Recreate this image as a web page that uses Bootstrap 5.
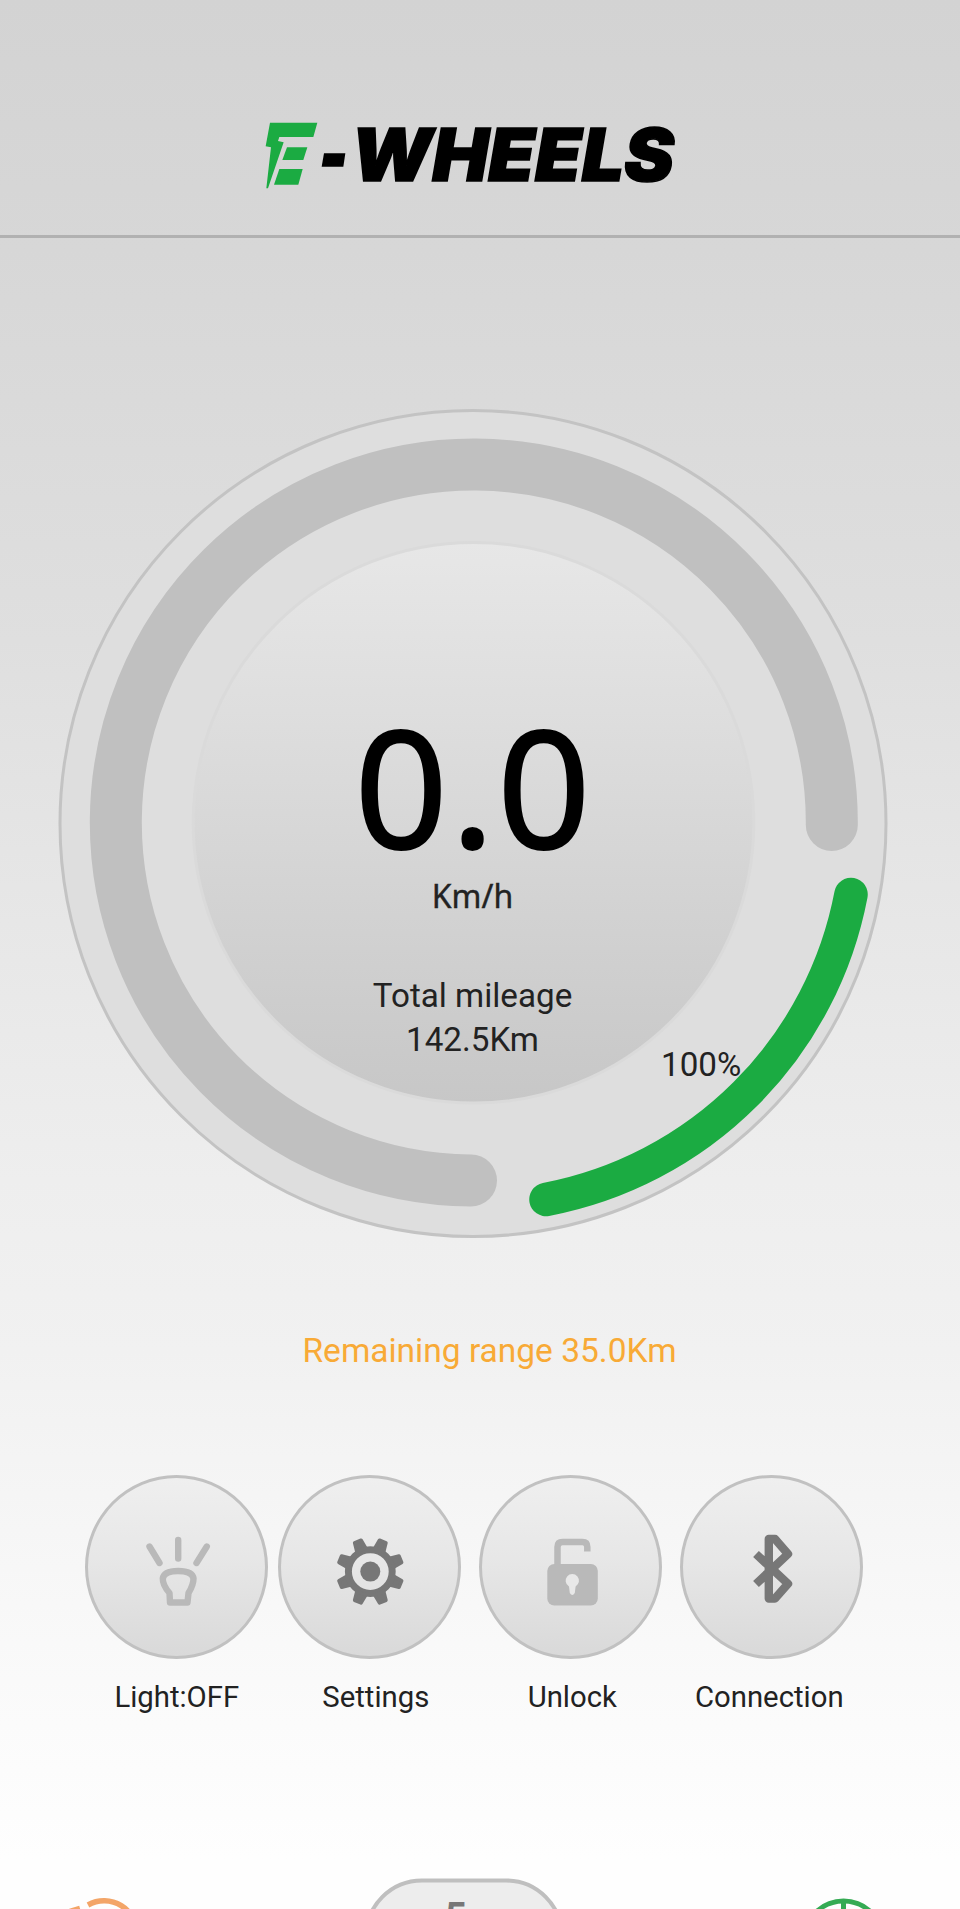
<!DOCTYPE html>
<html lang="en">
<head>
<meta charset="utf-8">
<meta name="viewport" content="width=device-width, initial-scale=1">
<title>E-Wheels</title>
<link rel="stylesheet" href="https://cdn.jsdelivr.net/npm/bootstrap@5.3.0/dist/css/bootstrap.min.css">
<style>
  body { font-family: Roboto, "Noto Sans", sans-serif; color: #222; background: #fefefe; }
  .app { width: 960px; height: 1909px;
    background: linear-gradient(#d3d3d3 0, #d7d7d7 250px, #dbdbdb 450px, #dfdfdf 640px, #e5e5e5 850px, #eee 1180px, #f1f1f1 1350px, #f6f6f6 1530px, #fafafa 1680px, #fefefe 1860px); }
  .top-bar { height: 238px; padding: 100px 0 0 240px; border-bottom: 3px solid #b1b1b1; }
  .gauge { width: 828px; height: 828px; margin: 171px 0 0 60px; }
  .readout { inset: 0; padding-right: 3px; }
  .speed { font: 400 163px/150px "Noto Sans", sans-serif; color: #000; margin-top: 301px; letter-spacing: 3px; text-indent: 3px; -webkit-text-stroke: 2px #000; }
  .unit { font: 400 32px/40px "Noto Sans", sans-serif; margin-top: 16px; -webkit-text-stroke: .4px #222; }
  .mileage { font-size: 33.2px; line-height: 44px; margin-top: 58px; }
  .charge { left: 601px; top: 634px; font-size: 33.2px; line-height: 44px; }
  .range-left { margin: 89px 0 0 19px; font-size: 33.5px; line-height: 50px; color: #f8aa36; }
  .actions { display: grid; grid-template-columns: 193px 200.5px 201px 184px; margin: 99px 0 0 85.3px; }
  .round-btn { width: 183px; height: 184px; border: 3px solid #c1c1c1; background: linear-gradient(#efefef, #e7e7e7 45%, #d9d9d9); }
  .round-btn svg { width: 183px; height: 184px; margin: -3px; display: block; }
  .caption { width: 183px; font-size: 29.3px; line-height: 36px; margin-top: 20px; }
</style>
</head>
<body>
<div class="app d-flex flex-column overflow-hidden">
  <header class="top-bar flex-shrink-0">
    <svg class="d-block" width="460" height="100" viewBox="0 0 460 100" role="img" aria-label="E-Wheels">
      <g transform="scale(.33333)">
        <g fill="#1bab42">
          <path d="M90 68H232L220 111H118L114 123L131 127L84 265H79L93 142L77 139Z"/>
          <path d="M141 142H202L190 180H127Z"/>
          <path d="M118 207H188L175 254H102Z"/>
        </g>
        <path d="M252 160H316L310 200H245Z"/>
      </g>
      <text x="111" y="80.500" font-family="Inter, sans-serif" font-weight="900" font-style="italic" font-size="73" textLength="323" lengthAdjust="spacingAndGlyphs" stroke="#000" stroke-width="1.600">WHEELS</text>
    </svg>
  </header>

  <section class="gauge position-relative flex-shrink-0">
    <svg class="d-block overflow-visible" width="828" height="828" viewBox="60 409 828 828">
      <defs>
        <linearGradient id="dial" x1="0" y1="0" x2="0" y2="1">
          <stop offset="0" stop-color="#e7e7e7"/><stop offset=".3" stop-color="#dedede"/><stop offset="1" stop-color="#c7c7c7"/>
        </linearGradient>
      </defs>
      <circle cx="473" cy="823.500" r="413" fill="#dedede" stroke="#c3c3c3" stroke-width="3"/>
      <circle cx="473.500" cy="822.800" r="280.300" fill="url(#dial)" stroke="#dadada" stroke-width="3"/>
      <path d="M471 1180.500A358 358 0 1 1 831.800 825" fill="none" stroke="#c0c0c0" stroke-width="52" stroke-linecap="round"/>
      <path d="M851 894.500A383.500 383.500 0 0 1 546 1199.500" fill="none" stroke="#1bab42" stroke-width="33.500" stroke-linecap="round"/>
    </svg>
    <div class="readout position-absolute text-center">
      <div class="speed">0.0</div>
      <div class="unit">Km/h</div>
      <div class="mileage">Total mileage<br>142.5Km</div>
    </div>
    <div class="charge position-absolute">100%</div>
  </section>

  <div class="range-left text-center">Remaining range 35.0Km</div>

  <nav class="actions text-center">
    <div>
      <div class="round-btn rounded-circle">
        <svg viewBox="0 0 183 184" fill="none" stroke="#b9b9b9" stroke-width="6.400" stroke-linecap="round" stroke-linejoin="round">
          <path d="M64.500 71.500L74.500 88M93.200 65V83.500M121.800 71.500L111.500 88"/>
          <path d="M85 127.500L84.500 118Q77.500 110 77.800 103.500Q79 96 93 96Q107.500 96 108.500 103.500Q108.500 110 103.500 118L102.500 127.500Z"/>
        </svg>
      </div>
      <div class="caption">Light:OFF</div>
    </div>
    <div>
      <div class="round-btn rounded-circle">
        <svg viewBox="0 0 183 184">
          <g transform="translate(92.300 96.600)" fill="none" stroke="#777">
            <circle r="21.900" stroke-width="7"/>
            <circle r="10" fill="#777" stroke="none"/>
            <g fill="#777" stroke-width="3.500" stroke-linejoin="round">
              <path id="cog" d="M-4.800 -23.500L-3.500 -32.500H3.500L4.800 -23.500Z" transform="rotate(22.500)"/>
              <use href="#cog" transform="rotate(45)"/><use href="#cog" transform="rotate(90)"/><use href="#cog" transform="rotate(135)"/><use href="#cog" transform="rotate(180)"/><use href="#cog" transform="rotate(225)"/><use href="#cog" transform="rotate(270)"/><use href="#cog" transform="rotate(315)"/>
            </g>
          </g>
        </svg>
      </div>
      <div class="caption ms-1 ps-1">Settings</div>
    </div>
    <div>
      <div class="round-btn rounded-circle">
        <svg viewBox="0 0 183 184">
          <path d="M78.500 92V72Q78.500 67 83.500 67H103.500Q108.300 67 108.300 72V76.500" fill="none" stroke="#b9b9b9" stroke-width="6.500"/>
          <rect x="68.300" y="89" width="50.500" height="41.500" rx="7" fill="#b9b9b9"/>
          <path d="M90 111.500A6.700 6.700 0 1 1 96.600 111.500L95.800 118Q93.300 122 90.800 118Z" fill="#e8e8e8"/>
        </svg>
      </div>
      <div class="caption ps-1">Unlock</div>
    </div>
    <div>
      <div class="round-btn rounded-circle">
        <svg viewBox="0 0 183 184">
          <path d="M76 79L108 108.800L95 123.500H88.800V64H95L108 79L76 109" fill="none" stroke="#777" stroke-width="8.400" stroke-linejoin="round"/>
        </svg>
      </div>
      <div class="caption pe-1">Connection</div>
    </div>
  </nav>

  <footer class="mt-auto">
    <svg class="d-block" width="960" height="39" viewBox="0 1870 960 39">
      <path d="M88 1905A33 33 0 0 1 137 1935M70 1911.500L80 1908.500" fill="none" stroke="#f3a568" stroke-width="5.500"/>
      <rect x="366" y="1880.500" width="196" height="112" rx="56" fill="#ededed" stroke="#bfbfbf" stroke-width="4"/>
      <text x="445" y="1930" font-family="Roboto, sans-serif" font-weight="700" font-size="38" fill="#777">5</text>
      <g fill="none" stroke="#35ab54" stroke-width="5"><circle cx="843.500" cy="1940.500" r="39.500"/><path d="M843.500 1900V1940"/></g>
    </svg>
  </footer>
</div>
<script src="https://cdn.jsdelivr.net/npm/bootstrap@5.3.0/dist/js/bootstrap.bundle.min.js"></script>
</body>
</html>
